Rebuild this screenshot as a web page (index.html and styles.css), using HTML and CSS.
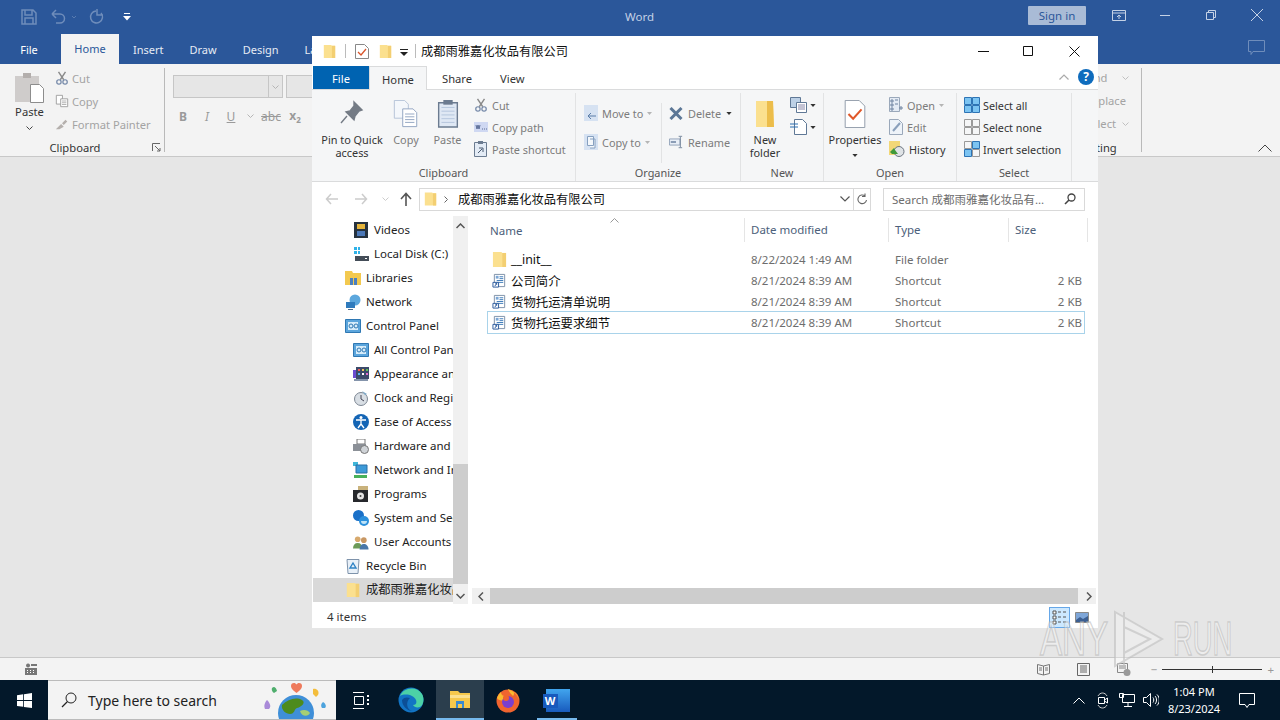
FILE: index.html
```html
<!DOCTYPE html>
<html lang="en">
<head>
  <meta charset="UTF-8">
  <meta name="viewport" content="width=device-width, initial-scale=1.0">
  <title>Word and File Explorer</title>
  <link rel="stylesheet" href="styles.css">
</head>
<body>
  <svg class="defs" width="0" height="0">
    <symbol id="folder" viewBox="0 0 16 18">
      <path d="M1 1h9l1 1h4v15H1z" fill="#fbe08f"/>
      <path d="M11 2h4v15h-4z" fill="#f3cf72"/>
    </symbol>
    <symbol id="link" viewBox="0 0 16 16">
      <path d="M2.500 1.500h11v13h-11z" fill="#fff" stroke="#7b8ea6"/>
      <path d="M8 4h4M8 6h4M5 8h7M5 10h7" stroke="#3a78b8"/>
      <path d="M4 3h3v3H4z" fill="#7ba7d6"/>
      <path d="M1 10h6v5H1z" fill="#fff" stroke="#27579c"/>
      <path d="M3 14l2-3M3.500 11H5v1.500" fill="none" stroke="#27579c"/>
    </symbol>
    <symbol id="cp" viewBox="0 0 16 14">
      <path d="M0.500 0.500h15v13H0.500z" fill="#5ba5dc" stroke="#2f78b3"/>
      <path d="M3 3h10v8H3z" fill="#d6ecfa"/>
      <circle cx="6" cy="7" r="2" fill="none" stroke="#2f78b3"/>
      <circle cx="11" cy="7" r="2" fill="none" stroke="#2f78b3"/>
    </symbol>
    <symbol id="scissors" viewBox="0 0 16 16">
      <path d="M4 1l6 9M12 1L6 10" stroke="#8a8a8a" stroke-width="1.600" fill="none"/>
      <circle cx="4.500" cy="12.500" r="2.500" fill="none" stroke="#7488a8" stroke-width="1.400"/>
      <circle cx="11.500" cy="12.500" r="2.500" fill="none" stroke="#7488a8" stroke-width="1.400"/>
    </symbol>
    <symbol id="pages" viewBox="0 0 16 16">
      <path d="M1.500 1.500h7v10h-7z" fill="#fff" stroke="#999"/>
      <path d="M6.500 5.500h8v9h-8z" fill="#fff" stroke="#999"/>
      <path d="M8 8h5M8 10h5M8 12h5" stroke="#aaa"/>
    </symbol>
    <symbol id="caret" viewBox="0 0 7 4">
      <path d="M0 0h7L3.500 4z" fill="currentColor"/>
    </symbol>
    <symbol id="chev" viewBox="0 0 7 4">
      <path d="M0.500 0.500l3 3 3-3" fill="none" stroke="currentColor"/>
    </symbol>
    <symbol id="grid4" viewBox="0 0 16 16">
      <path d="M0.500 0.500h7v7h-7zM8.500 0.500h7v7h-7zM0.500 8.500h7v7h-7zM8.500 8.500h7v7h-7z" fill="none" stroke="currentColor"/>
    </symbol>
  </svg>

  <div class="word">
    <div class="w-title">
      <div class="qat">
        <svg width="16" height="16" viewBox="0 0 16 16"><path d="M1 1h11l3 3v11H1z M4 1v5h7V1 M4 15v-6h8v6" fill="none" stroke="#6f8dbb" stroke-width="1.500"/></svg>
        <svg width="26" height="16" viewBox="0 0 26 16"><path d="M2 5h8a4 4 0 0 1 0 9H6M2 5l4-4M2 5l4 4" fill="none" stroke="#6f8dbb" stroke-width="1.500"/><path d="M22 7l2 2 2-2" fill="none" stroke="#587bb0"/></svg>
        <svg width="16" height="16" viewBox="0 0 16 16"><path d="M12 4a6 6 0 1 1-5-2M8 0v6h6" fill="none" stroke="#6f8dbb" stroke-width="1.500"/></svg>
        <svg class="qat-more" width="8" height="8" viewBox="0 0 8 8"><path d="M1 0h6v1H1zM0 3h8L4 7.500z" fill="#fff"/></svg>
      </div>
      <span class="w-name">Word</span>
      <div class="w-controls">
        <span class="signin">Sign in</span>
        <svg width="14" height="11" viewBox="0 0 14 11"><path d="M0.500 0.500h13v10H0.500zM0.500 3h13M7 9V5M5 7l2-2 2 2" fill="none" stroke="#c5d2e6"/></svg>
        <svg class="w-min" width="10" height="1" viewBox="0 0 10 1"><path d="M0 0h10v1H0z" fill="#c5d2e6"/></svg>
        <svg class="w-max" width="10" height="10" viewBox="0 0 10 10"><path d="M0.500 2.500h7v7h-7zM2.500 2.500v-2h7v7h-2" fill="none" stroke="#c5d2e6"/></svg>
        <svg class="w-close" width="12" height="12" viewBox="0 0 12 12"><path d="M0 0l12 12M12 0L0 12" stroke="#c5d2e6"/></svg>
      </div>
    </div>
    <div class="w-tabs">
      <span class="w-file">File</span>
      <span class="w-tab active">Home</span>
      <span class="w-tab">Insert</span>
      <span class="w-tab">Draw</span>
      <span class="w-tab">Design</span>
      <span class="w-tab">Layout</span>
      <svg class="w-comment" width="17" height="15" viewBox="0 0 17 15"><path d="M0.500 0.500h16v11H5l-2 3v-3H0.500z" fill="none" stroke="#6f8dbb"/></svg>
    </div>
    <div class="w-ribbon">
      <div class="w-clip">
        <div class="w-clip-body">
          <div class="w-paste">
            <svg width="29" height="31" viewBox="0 0 29 31"><path d="M0 4h24v26H0z" fill="#cfcccb"/><path d="M8 1h8v5H8z" fill="#b3aeac"/><path d="M15.500 12.500h9l4 4v14h-13z" fill="#fff" stroke="#8d8d8d"/></svg>
            <span>Paste</span>
            <svg class="w-chev" width="7" height="4"><use href="#chev"/></svg>
          </div>
          <div class="w-small">
            <div><svg width="14" height="14"><use href="#scissors"/></svg>Cut</div>
            <div><svg width="14" height="14"><use href="#pages"/></svg>Copy</div>
            <div><svg width="14" height="14" viewBox="0 0 16 14"><path d="M1 13l6-6 3 3-5 3zM8 6l4-4 2 2-4 4z" fill="#b5b0ad"/></svg>Format Painter</div>
          </div>
        </div>
        <div class="w-group-label">Clipboard<svg class="launcher" width="9" height="9" viewBox="0 0 9 9"><path d="M0.500 8V0.500H8M3 3l5 5M5 8h3V5" fill="none" stroke="#666"/></svg></div>
      </div>
      <div class="w-font">
        <div class="combo-row">
          <div class="combo"><span class="combo-arrow"><svg width="7" height="4"><use href="#chev"/></svg></span></div>
          <div class="combo combo-size"></div>
        </div>
        <div class="fmt-row">
          <b>B</b><i>I</i><u>U</u><span class="fmt-chev"><svg width="7" height="4"><use href="#chev"/></svg></span><s>abc</s><span class="fmt-sub">x<sub>2</sub></span>
        </div>
      </div>
      <div class="w-edit">
        <div class="w-edit-list">
          <span>Find<svg width="7" height="4"><use href="#chev"/></svg></span>
          <span>Replace</span>
          <span>Select<svg width="7" height="4"><use href="#chev"/></svg></span>
        </div>
        <div class="w-group-label edit-label">Editing</div>
      </div>
      <div class="w-collapse">
        <svg width="14" height="8" viewBox="0 0 14 8"><path d="M0.500 7.500L7 1l6.500 6.500" fill="none" stroke="#444"/></svg>
      </div>
    </div>
    <div class="w-doc"></div>
    <div class="w-status">
      <svg class="macro" width="12" height="12" viewBox="0 0 12 12"><path d="M3 0.500a2 2 0 1 0 .1 0zM6 1h6v2H6zM0 5h12v7H0z" fill="#777"/><path d="M2 7h1v1H2zM5 7h1v1H5zM8 7h1v1H8zM2 9h1v1H2zM5 9h1v1H5zM8 9h1v1H8z" fill="#fff"/></svg>
      <div class="w-views">
        <svg width="13" height="13" viewBox="0 0 13 13"><path d="M0.500 1.500L6.500 3l6-1.500v9l-6 1.500-6-1.500zM6.500 3v9M2 5h3M2 7h3M8 5h3M8 7h3" fill="none" stroke="#777"/></svg>
        <svg width="13" height="13" viewBox="0 0 13 13"><path d="M0.500 0.500h12v12H0.500zM3 3h7M3 5h7M3 7h7M3 9h7" fill="none" stroke="#666"/></svg>
        <svg width="14" height="13" viewBox="0 0 14 13"><path d="M0.500 0.500h10v9H0.500zM2 3h7M2 5h7" fill="none" stroke="#888"/><circle cx="10" cy="9.500" r="3.500" fill="#999"/></svg>
        <div class="zoom">
          <span>−</span>
          <div class="zoom-track"><i></i></div>
          <span>+</span>
        </div>
      </div>
    </div>
  </div>

  <div class="taskbar">
    <div class="tb-start">
      <svg width="15" height="15" viewBox="0 0 15 15"><path d="M0 2.200L6.200 1.300V7H0zM7 1.200L15 0v7H7zM0 8h6.200v5.800L0 12.900zM7 8h8v7l-8-1.100z" fill="#fff"/></svg>
    </div>
    <div class="tb-search">
      <svg width="16" height="16" viewBox="0 0 16 16"><circle cx="10" cy="6" r="5" fill="none" stroke="#222"/><path d="M6.500 9.500L1 15" stroke="#222" stroke-width="1.300"/></svg>
      <span>Type here to search</span>
      <svg class="tb-globe" width="72" height="40" viewBox="0 0 72 40">
        <circle cx="36" cy="33" r="18" fill="#3f8fd8"/>
        <path d="M22 25c6-6 14-8 20-5 4 2 0 7-5 8-3 1-2 6-7 6-4 0-9-4-8-9z" fill="#4d8b1d"/>
        <path d="M40 31c4-2 8-1 10 2-2 4-8 4-10-2z" fill="#a6cf73"/>
        <path d="M34 11c-4-3-4-8 0-8 1 0 2 .6 2.500 1.500C37 3.600 38 3 39 3c4 0 4 5 0 8l-2.500 2z" fill="#ee7a5c"/>
        <path d="M14 13c-3-2-3-6 0-6 2 0 3 4 3 4z" fill="#4fae6d"/>
        <path d="M53 9c3-1 7 2 5 6l-2 2-3-3z" fill="#f3bd3c"/>
        <path d="M5 29c-2-4 1-8 2-9 2 2 5 6 2 9z" fill="#a98ad8"/>
        <path d="M62 28c-2-3 0-5 1-6 2 1 4 4 2 6z" fill="#4da3dd"/>
      </svg>
    </div>
    <div class="tb-icons">
      <div class="tb-icon tb-view">
        <svg width="16" height="17" viewBox="0 0 16 17"><path d="M0 0.500h11M0 16.500h11M1.500 4.500h9v8h-9z" fill="none" stroke="#fff"/><path d="M14 3h2v2h-2zM14 7h2v2h-2zM14 11h2v2h-2z" fill="#fff"/></svg>
      </div>
      <div class="tb-icon tb-edge">
        <svg width="26" height="26" viewBox="0 0 26 26"><circle cx="13" cy="13" r="12.500" fill="#1274c4"/><path d="M2 9C5 1 18-2 24 7c3 5 1 12-2 13-3 1-6 0-7-2 3 0 4-2 3-5-2-5-11-7-16-4z" fill="#4cd1a6"/><path d="M4 13c0 6 5 11 11 11-6 0-8-9-3-13-3-1-6-1-8 2z" fill="#0c4f96"/></svg>
      </div>
      <div class="tb-icon tb-explorer">
        <svg width="20" height="18" viewBox="0 0 20 18"><path d="M0 1h8l2 2h10v15H0z" fill="#f6c84c"/><path d="M0 5h20v3H0z" fill="#fbe08f"/><path d="M6 11h8v7h-2v-4H8v4H6z" fill="#3a8ad0"/></svg>
      </div>
      <div class="tb-icon tb-fox">
        <svg width="24" height="26" viewBox="0 0 24 26"><circle cx="12" cy="14" r="11.500" fill="#f0642f"/><path d="M12 2c6 2 11 7 11 13 0-6-3-9-5-10 0 2 0 3-1 4-2-2-4-4-5-7z" fill="#fbb930"/><path d="M1 11c1-3 3-5 4-6 0 3 2 4 4 4-2 1-2 3-1 4-3 1-6 0-7-2z" fill="#fbb930"/><circle cx="12" cy="15" r="6" fill="#7a3fd0"/><circle cx="10" cy="11" r="3" fill="#f0642f"/></svg>
      </div>
      <div class="tb-icon tb-word">
        <div class="word-logo"><span>W</span></div>
      </div>
    </div>
    <div class="tray">
      <svg width="12" height="7" viewBox="0 0 12 7"><path d="M0.500 6.500L6 1l5.500 5.500" fill="none" stroke="#fff"/></svg>
      <svg class="tray-meet" width="12" height="17" viewBox="0 0 12 17"><path d="M1 4c2-4 7-4 9 0M1 13c2 4 7 4 9 0" fill="none" stroke="#ccc"/><path d="M1.500 5.500h6v6h-6zM7.500 8l3-2v5l-3-2" fill="none" stroke="#fff"/></svg>
      <svg class="tray-net" width="16" height="14" viewBox="0 0 16 14"><path d="M3.500 1.500h12v8h-12zM9 9.500V13M5 13.500h8M0.500 0.500h4v4h-4z" fill="#03182a" stroke="#fff"/></svg>
      <svg class="tray-vol" width="16" height="14" viewBox="0 0 16 14"><path d="M0.500 4.500h3l4-4v13l-4-4h-3zM10 4.500c1 1 1 4 0 5M12 3c2 2 2 6 0 8M14 1.500c3 3 3 8 0 11" fill="none" stroke="#fff"/></svg>
      <div class="clock"><span>1:04 PM</span><span>8/23/2024</span></div>
      <svg width="16" height="15" viewBox="0 0 16 15"><path d="M0.500 0.500h15v11H10l-2 3-2-3H0.500z" fill="none" stroke="#fff"/></svg>
    </div>
  </div>

  <div class="explorer">
    <div class="x-title">
      <svg class="x-q" width="13" height="15"><use href="#folder"/></svg>
      <i class="x-bar"></i>
      <svg class="x-q" width="14" height="15" viewBox="0 0 14 15"><path d="M0.500 0.500h9l4 4v10h-13z" fill="#fff" stroke="#888"/><path d="M3 8l3 3 5-6" fill="none" stroke="#d9542a" stroke-width="1.300"/></svg>
      <svg class="x-q" width="13" height="15"><use href="#folder"/></svg>
      <svg class="x-more" width="8" height="7" viewBox="0 0 8 7"><path d="M0 0h8v1H0zM0 3h8L4 7z" fill="#222"/></svg>
      <i class="x-bar x-bar-end"></i>
      <span class="x-name">成都雨雅嘉化妆品有限公司</span>
      <div class="x-controls">
        <svg width="11" height="1" viewBox="0 0 11 1"><path d="M0 0h11v1H0z" fill="#111"/></svg>
        <svg class="x-maximize" width="10" height="10" viewBox="0 0 10 10"><path d="M0.500 0.500h9v9h-9z" fill="none" stroke="#111"/></svg>
        <svg width="11" height="11" viewBox="0 0 11 11"><path d="M0.500 0.500l10 10M10.500 0.500l-10 10" stroke="#111"/></svg>
      </div>
    </div>
    <div class="x-tabs">
      <span class="x-file">File</span>
      <span class="x-tab active">Home</span>
      <span class="x-tab">Share</span>
      <span class="x-tab">View</span>
      <div class="x-help">
        <svg width="10" height="6" viewBox="0 0 10 6"><path d="M0.500 5.500L5 1l4.500 4.500" fill="none" stroke="#aaa" stroke-width="1.200"/></svg>
        <span class="help-dot">?</span>
      </div>
    </div>
    <div class="x-ribbon">
      <div class="group g-clipboard">
        <div class="group-body">
          <div class="big b-pin">
            <svg width="24" height="28" viewBox="0 0 24 28"><path d="M14 2l8 8-3 1-4 5-1 4-8-8 4-1 4-5zM7 16l-6 7" fill="#747b85" stroke="#747b85" stroke-width="1.400"/></svg>
            <span>Pin to Quick<br>access</span>
          </div>
          <div class="big b-copy dim">
            <svg width="26" height="30" viewBox="0 0 26 30"><path d="M0.500 0.500h11l4 4v15h-15z" fill="#f4f7fb" stroke="#b4c2d6"/><path d="M9.500 9.500h11l4 4v15h-15z" fill="#fff" stroke="#8fa3bf"/><path d="M12 15h10M12 18h10M12 21h10M12 24h10" stroke="#8fa3bf"/></svg>
            <span>Copy</span>
          </div>
          <div class="big b-paste dim">
            <svg width="22" height="30" viewBox="0 0 22 30"><path d="M1 3h20v26H1z" fill="#dfe8f4" stroke="#6b7b90" stroke-width="1.500"/><path d="M6 0h10v5H6z" fill="#6b7b90"/><path d="M4 8h14M4 12h14M4 16h14M4 20h14M4 24h14" stroke="#b3c4dc"/></svg>
            <span>Paste</span>
          </div>
          <div class="smalls dim">
            <div><svg width="14" height="16"><use href="#scissors"/></svg>Cut</div>
            <div><svg width="14" height="10" viewBox="0 0 14 10"><path d="M0 0h14v10H0z" fill="#cfd8f2"/><path d="M2 3l1 4 1-4 1 4 1-4M8 7h1M10 7h1M12 7h1" stroke="#5a6c96" fill="none"/></svg>Copy path</div>
            <div><svg width="14" height="16" viewBox="0 0 14 16"><path d="M0.500 1.500h12v14h-12z" fill="#e3ebf5" stroke="#6b7b90"/><path d="M4 0h5v3H4z" fill="#6b7b90"/><path d="M4 12l4-4M5 7h4v4" stroke="#4a5a70" fill="none"/></svg>Paste shortcut</div>
          </div>
        </div>
        <div class="group-label">Clipboard</div>
      </div>
      <div class="group g-organize">
        <div class="group-body">
          <div class="two-col dim">
            <div class="mid"><svg width="14" height="16" viewBox="0 0 14 16"><path d="M0 0h14v16H0z" fill="#d6e2f2"/><path d="M4 11h8M4 11l3-3M4 11l3 3" stroke="#5a7da8" fill="none"/></svg>Move to<svg class="mini" width="5" height="3"><use href="#caret"/></svg></div>
            <div class="mid"><svg width="14" height="16" viewBox="0 0 14 16"><path d="M0 0h14v16H0z" fill="#d6e2f2"/><path d="M3.500 2.500h6v9h-6zM6 5h5v9H6" fill="#f3f7fb" stroke="#86a0c0"/></svg>Copy to<svg class="mini" width="5" height="3"><use href="#caret"/></svg></div>
          </div>
          <i class="inner-sep"></i>
          <div class="two-col dim col-del">
            <div class="mid"><svg width="14" height="13" viewBox="0 0 14 13"><path d="M1.500 1l11 11M12.500 1l-11 11" stroke="#5c7796" stroke-width="3"/></svg>Delete<svg class="mini dark" width="6" height="3"><use href="#caret"/></svg></div>
            <div class="mid"><svg width="14" height="14" viewBox="0 0 16 14"><path d="M0.500 3.500h12v7h-12z" fill="#e8eef6" stroke="#8a9cb3"/><path d="M2 6h6v2H2z" fill="#7e92ad"/><path d="M13 1v12M11 0.500h4M11 13.500h4" stroke="#6d7f96"/></svg>Rename</div>
          </div>
        </div>
        <div class="group-label">Organize</div>
      </div>
      <div class="group g-new">
        <div class="group-body">
          <div class="big b-newfolder">
            <svg width="20" height="28" viewBox="0 0 20 28"><path d="M1 1h17l1 26H1z" fill="#fbe08f"/><path d="M12 1h6l1 26h-7z" fill="#ecbd4b"/></svg>
            <span>New<br>folder</span>
          </div>
          <div class="new-small">
            <div><svg width="18" height="16" viewBox="0 0 18 16"><path d="M0.500 0.500h10v10h-10z" fill="#bcd0e6" stroke="#5f7896"/><path d="M6.500 5.500h10v10h-10z" fill="#fff" stroke="#5f7896"/><path d="M8 8h7M8 10h7M8 12h7" stroke="#88a"/></svg><svg class="mini dark" width="6" height="3"><use href="#caret"/></svg></div>
            <div><svg width="18" height="16" viewBox="0 0 18 16"><path d="M4.500 0.500h8l4 4v11h-12z" fill="#fff" stroke="#5f7896"/><path d="M0 5h8M0 8h8" stroke="#2d6fb0"/></svg><svg class="mini dark" width="6" height="3"><use href="#caret"/></svg></div>
          </div>
        </div>
        <div class="group-label">New</div>
      </div>
      <div class="group g-open">
        <div class="group-body">
          <div class="big b-props">
            <svg width="22" height="30" viewBox="0 0 22 30"><path d="M0.500 0.500h15l6 6v23h-21z" fill="#fff" stroke="#8d98a6"/><path d="M4 15l5 5 9-10" fill="none" stroke="#e0582a" stroke-width="2.200"/></svg>
            <span>Properties</span>
            <svg class="prop-caret" width="6" height="3"><use href="#caret"/></svg>
          </div>
          <div class="smalls open-list">
            <div class="dim"><svg width="14" height="16" viewBox="0 0 14 16"><path d="M0.500 0.500h10v14h-10z" fill="#e4ebf4" stroke="#9aa8ba"/><path d="M2 3h2v2H2zM2 7h2v2H2zM2 11h2v2H2zM6 3h3M6 7h3M10 11h4M12 9v4" stroke="#6f83a0" fill="none"/></svg>Open<svg class="mini" width="5" height="3"><use href="#caret"/></svg></div>
            <div class="dim"><svg width="14" height="16" viewBox="0 0 14 16"><path d="M0.500 0.500h9l4 4v11h-13z" fill="#eef3f9" stroke="#9aa8ba"/><path d="M4 12l7-8" stroke="#8aa0bc" stroke-width="2"/></svg>Edit</div>
            <div><svg width="16" height="16" viewBox="0 0 16 16"><path d="M0 0h11v14H0z" fill="#f2d777"/><circle cx="10" cy="10.500" r="5" fill="#dfe3e6" stroke="#6b7480"/><path d="M1 11l4-4 1 2 3 4H3z" fill="#3f9a3a"/></svg>History</div>
          </div>
        </div>
        <div class="group-label">Open</div>
      </div>
      <div class="group g-select">
        <div class="group-body">
          <div class="smalls select-list">
            <div><svg width="16" height="16" viewBox="0 0 16 16"><path d="M0.500 0.500h7v7h-7zM8.500 0.500h7v7h-7zM0.500 8.500h7v7h-7zM8.500 8.500h7v7h-7z" fill="#7cc4f2" stroke="#2e74b5"/></svg>Select all</div>
            <div><svg class="ico-gray" width="16" height="16"><use href="#grid4"/></svg>Select none</div>
            <div><svg width="16" height="16" viewBox="0 0 16 16"><path d="M8.500 0.500h7v7h-7zM0.500 8.500h7v7h-7z" fill="#7cc4f2" stroke="#2e74b5"/><path d="M0.500 0.500h7v7h-7zM8.500 8.500h7v7h-7z" fill="none" stroke="#999"/></svg>Invert selection</div>
          </div>
        </div>
        <div class="group-label">Select</div>
      </div>
    </div>
    <div class="x-address">
      <div class="x-nav">
        <svg width="14" height="12" viewBox="0 0 14 12"><path d="M13 6H2M6 1L1.500 6 6 11" fill="none" stroke="#ccc" stroke-width="1.500"/></svg>
        <svg width="14" height="12" viewBox="0 0 14 12"><path d="M1 6h11M8 1l4.500 5L8 11" fill="none" stroke="#ccc" stroke-width="1.500"/></svg>
        <svg width="7" height="4" viewBox="0 0 7 4"><path d="M0.500 0.500l3 3 3-3" fill="none" stroke="#ccc"/></svg>
        <svg width="12" height="14" viewBox="0 0 12 14"><path d="M6 14V2M1 7l5-5.500L11 7" fill="none" stroke="#555" stroke-width="1.600"/></svg>
      </div>
      <div class="x-path">
        <svg width="13" height="16"><use href="#folder"/></svg>
        <svg class="path-chev" width="4" height="7" viewBox="0 0 4 7"><path d="M0.500 0.500l3 3-3 3" fill="none" stroke="#666"/></svg>
        <span>成都雨雅嘉化妆品有限公司</span>
        <div class="path-end">
          <svg width="10" height="6" viewBox="0 0 10 6"><path d="M0.500 0.500L5 5l4.500-4.500" fill="none" stroke="#555" stroke-width="1.200"/></svg>
          <i></i>
          <svg width="11" height="12" viewBox="0 0 11 12"><path d="M9.500 7A4.300 4.300 0 1 1 8 3M8 0.500V3.500H5" fill="none" stroke="#666" stroke-width="1.100"/></svg>
        </div>
      </div>
      <div class="x-search">
        <span>Search 成都雨雅嘉化妆品有...</span>
        <svg width="12" height="12" viewBox="0 0 12 12"><circle cx="7.500" cy="4.500" r="3.500" fill="none" stroke="#444" stroke-width="1.300"/><path d="M5 7l-4 4" stroke="#444" stroke-width="1.600"/></svg>
      </div>
    </div>
    <div class="x-main">
      <div class="nav-pane">
        <div class="nav-rows">
          <div class="nav-row sub"><svg width="16" height="16" viewBox="0 0 16 16"><path d="M1 0h14v16H1z" fill="#26323f"/><path d="M4 2h8v5H4z" fill="#e4b43c"/><path d="M4 9h8v5H4z" fill="#4b78b8"/></svg><span>Videos</span></div>
          <div class="nav-row sub"><svg width="16" height="14" viewBox="0 0 16 14"><path d="M1 0h3v3H1zM5 0h2v3H5zM1 4h3v3H1zM5 4h2v3H5z" fill="#2fb2e8"/><path d="M2 9h14v5H2z" fill="#444d58"/><path d="M12 11h2v1h-2z" fill="#fff"/></svg><span>Local Disk (C:)</span></div>
          <div class="nav-row"><svg width="16" height="14" viewBox="0 0 16 14"><path d="M0 0h7l1 2h8v12H0z" fill="#f3c94f"/><path d="M5 7h3v7H5zM9 7h3v7H9z" fill="#4a7fc0"/></svg><span>Libraries</span></div>
          <div class="nav-row"><svg width="16" height="16" viewBox="0 0 16 16"><circle cx="10" cy="6" r="5.500" fill="#5ca7dd"/><path d="M1 8h9v6H1z" fill="#2f7bbd"/><path d="M3 15h5v1H3z" fill="#4a6a8a"/></svg><span>Network</span></div>
          <div class="nav-row"><svg width="16" height="14"><use href="#cp"/></svg><span>Control Panel</span></div>
          <div class="nav-row sub"><svg width="16" height="14"><use href="#cp"/></svg><span>All Control Panel Items</span></div>
          <div class="nav-row sub"><svg width="16" height="14" viewBox="0 0 16 14"><path d="M0 3h4v8H0z" fill="#6a4bd0"/><path d="M3 0h13v12H3z" fill="#3b4a6a"/><path d="M5 2h2v2H5z" fill="#f05a5a"/><path d="M9 2h2v2H9z" fill="#f0c05a"/><path d="M13 2h2v2h-2z" fill="#5ac05a"/><path d="M5 6h2v2H5z" fill="#5ab0f0"/><path d="M9 6h2v2H9z" fill="#fff"/><path d="M13 6h2v2h-2z" fill="#e070d0"/><path d="M1 12h14v2H1z" fill="#8494ab"/></svg><span>Appearance and Personalization</span></div>
          <div class="nav-row sub"><svg width="16" height="16" viewBox="0 0 16 16"><circle cx="8" cy="9" r="6.500" fill="#d8dee4" stroke="#7d8793"/><path d="M8 5v4l3 2" stroke="#445" fill="none"/><path d="M9 1l5 3-2 1z" fill="#7aa7c8"/></svg><span>Clock and Region</span></div>
          <div class="nav-row sub"><svg width="16" height="16" viewBox="0 0 16 16"><circle cx="8" cy="8" r="8" fill="#1465b5"/><circle cx="8" cy="3.500" r="1.500" fill="#fff"/><path d="M3 6h10M8 6v4M8 10l-3 4M8 10l3 4" stroke="#fff" stroke-width="1.300"/></svg><span>Ease of Access</span></div>
          <div class="nav-row sub"><svg width="16" height="15" viewBox="0 0 16 15"><path d="M4 0h8v5H4z" fill="#fff" stroke="#777"/><path d="M0 5h13v7H0z" fill="#8b9097"/><circle cx="11.500" cy="10.500" r="4" fill="#cfd3d7" stroke="#777"/></svg><span>Hardware and Sound</span></div>
          <div class="nav-row sub"><svg width="16" height="16" viewBox="0 0 16 16"><path d="M0 0h5v4H0z" fill="#3fb6d8"/><path d="M3 3h11v8H3z" fill="#3d9ad8" stroke="#2a6fa5"/><path d="M1 13h13v3H1z" fill="#49b15a"/></svg><span>Network and Internet</span></div>
          <div class="nav-row sub"><svg width="16" height="16" viewBox="0 0 16 16"><path d="M0 4h15v12H0z" fill="#26282c"/><path d="M5 0h10v4H5z" fill="#c9b27c"/><circle cx="7.500" cy="10" r="3.500" fill="#e5e5e5"/><circle cx="7.500" cy="10" r="1" fill="#444"/></svg><span>Programs</span></div>
          <div class="nav-row sub"><svg width="16" height="16" viewBox="0 0 16 16"><circle cx="5.500" cy="5.500" r="5.500" fill="#1a70c8"/><circle cx="11" cy="11" r="5" fill="#2c90dc"/><path d="M8 11a3 3 0 0 0 6 0z" fill="#bfe3f7"/></svg><span>System and Security</span></div>
          <div class="nav-row sub"><svg width="17" height="15" viewBox="0 0 17 15"><circle cx="5" cy="4" r="3" fill="#d7a96d"/><path d="M0 14c0-4 2-6 5-6s5 2 5 6z" fill="#6c9a58"/><circle cx="11.500" cy="5" r="3" fill="#c89763"/><path d="M7 15c0-4 2-6 4.500-6s5 2 5 6z" fill="#4977a8"/></svg><span>User Accounts</span></div>
          <div class="nav-row"><svg width="13" height="15" viewBox="0 0 13 15"><path d="M0.500 0.500h12l-1 14h-10z" fill="#e8f0f8" stroke="#7e93ab"/><path d="M6.500 4l3 5h-6z" fill="none" stroke="#2d82c5" stroke-width="1.400"/></svg><span>Recycle Bin</span></div>
          <div class="nav-row picked"><svg width="14" height="16"><use href="#folder"/></svg><span>成都雨雅嘉化妆品有限公司</span></div>
        </div>
        <div class="v-scroll">
          <svg width="9" height="6" viewBox="0 0 9 6"><path d="M0.500 5L4.500 1l4 4" fill="none" stroke="#555" stroke-width="1.500"/></svg>
          <div class="v-track"><div class="v-thumb"></div></div>
          <svg width="9" height="6" viewBox="0 0 9 6"><path d="M0.500 1l4 4 4-4" fill="none" stroke="#555" stroke-width="1.500"/></svg>
        </div>
      </div>
      <div class="file-pane">
        <div class="file-head">
          <svg class="sort-arrow" width="9" height="5" viewBox="0 0 9 5"><path d="M0.500 4.500l4-4 4 4" fill="none" stroke="#999"/></svg>
          <span class="c-name">Name</span>
          <span class="c-date">Date modified</span>
          <span class="c-type">Type</span>
          <span class="c-size">Size</span>
        </div>
        <div class="file-rows">
          <div class="file-row">
            <span class="c-name"><svg width="15" height="17"><use href="#folder"/></svg><b>__init__</b></span>
            <span class="c-date">8/22/2024 1:49 AM</span>
            <span class="c-type">File folder</span>
            <span class="c-size"></span>
          </div>
          <div class="file-row">
            <span class="c-name"><svg width="15" height="15"><use href="#link"/></svg><b>公司简介</b></span>
            <span class="c-date">8/21/2024 8:39 AM</span>
            <span class="c-type">Shortcut</span>
            <span class="c-size">2 KB</span>
          </div>
          <div class="file-row">
            <span class="c-name"><svg width="15" height="15"><use href="#link"/></svg><b>货物托运清单说明</b></span>
            <span class="c-date">8/21/2024 8:39 AM</span>
            <span class="c-type">Shortcut</span>
            <span class="c-size">2 KB</span>
          </div>
          <div class="file-row focused">
            <span class="c-name"><svg width="15" height="15"><use href="#link"/></svg><b>货物托运要求细节</b></span>
            <span class="c-date">8/21/2024 8:39 AM</span>
            <span class="c-type">Shortcut</span>
            <span class="c-size">2 KB</span>
          </div>
        </div>
        <div class="h-scroll">
          <svg width="6" height="9" viewBox="0 0 6 9"><path d="M5 0.500l-4 4 4 4" fill="none" stroke="#555" stroke-width="1.500"/></svg>
          <div class="h-thumb"></div>
          <svg width="6" height="9" viewBox="0 0 6 9"><path d="M1 0.500l4 4-4 4" fill="none" stroke="#555" stroke-width="1.500"/></svg>
        </div>
      </div>
    </div>
    <div class="x-status">
      <span>4 items</span>
      <div class="x-views">
        <div class="view-btn on"><svg width="15" height="15" viewBox="0 0 15 15"><path d="M1 1h3v3H1zM1 6h3v3H1zM1 11h3v3H1zM6 2h3M11 2h3M6 7h3M11 7h3M6 12h3M11 12h3" fill="#fff" stroke="#555"/></svg></div>
        <div class="view-btn"><svg width="14" height="11" viewBox="0 0 14 11"><path d="M0.500 0.500h13v10H0.500z" fill="#7ea6d8" stroke="#888"/><path d="M1 8l4-3 3 2 5-3v6H1z" fill="#3c5f92"/></svg></div>
      </div>
    </div>
  </div>

  <div class="watermark">
    <span class="wm-any">ANY</span>
    <svg width="54" height="60" viewBox="0 0 54 60"><path d="M3 3l47 27L3 57zM12 3v54M12 18l26 12-26 14" fill="rgba(255,255,255,.25)" stroke="rgba(190,190,190,.6)" stroke-width="2"/></svg>
    <span class="wm-run">RUN</span>
  </div>
</body>
</html>
```

FILE: styles.css
```css
* {
  box-sizing: border-box;
}
html, body {
  height: 100%;
}
body {
  margin: 0;
  width: 1280px;
  height: 720px;
  overflow: hidden;
  display: flex;
  flex-direction: column;
  position: relative;
  font-family: 'Noto Sans', 'Noto Sans CJK SC', sans-serif;
  font-size: 11.5px;
  color: #222;
  background: #e6e6e6;
}
svg {
  display: block;
  flex: none;
}
.defs {
  position: absolute;
}

/* Word behind the explorer window */
.word {
  flex: 1;
  display: flex;
  flex-direction: column;
  min-height: 0;
}
.w-title {
  height: 34px;
  background: #2b579a;
  display: flex;
  align-items: center;
  color: #c5d2e6;
  position: relative;
}
.qat {
  display: flex;
  align-items: center;
  gap: 13px;
  padding-left: 21px;
}
.qat-more {
  margin-left: 5px;
}
.w-name {
  position: absolute;
  left: 625px;
  top: 9px;
}
.w-controls {
  margin-left: auto;
  margin-top: -4px;
  display: flex;
  align-items: center;
}
.signin {
  width: 58px;
  height: 19px;
  margin-right: 26px;
  background: #a9bbd6;
  color: #2b579a;
  text-align: center;
  line-height: 19px;
  border-radius: 1px;
}
.w-min {
  margin-left: 34px;
}
.w-max {
  margin-left: 36px;
}
.w-close {
  margin-left: 35px;
  margin-right: 17px;
}
.w-tabs {
  height: 30px;
  background: #2b579a;
  display: flex;
  align-items: flex-end;
  color: #e6ebf4;
  font-size: 11px;
  position: relative;
}
.w-file {
  width: 61px;
  text-align: center;
  padding-bottom: 7px;
  color: #fff;
  padding-right: 3px;
}
.w-tab {
  padding: 0 13px 7px;
}
.w-tab.active {
  width: 58px;
  height: 30px;
  margin-right: 1px;
  background: #f3f3f3;
  color: #2b579a;
  text-align: center;
  padding: 7px 0 0;
}
.w-comment {
  position: absolute;
  right: 15px;
  top: 6px;
}
.w-ribbon {
  height: 93px;
  background: #f3f3f3;
  border-bottom: 1px solid #c8c8c8;
  display: flex;
  color: #a3a3a3;
  font-size: 11.2px;
}
.w-clip {
  width: 165px;
  margin: 4px 0;
  border-right: 1px solid #b9b9b9;
  display: flex;
  flex-direction: column;
  justify-content: space-between;
}
.w-clip-body {
  display: flex;
}
.w-paste {
  width: 50px;
  padding: 4px 0 0 9px;
  display: flex;
  flex-direction: column;
  align-items: center;
  color: #333;
}
.w-paste span {
  margin-top: 1px;
}
.w-chev {
  margin-top: 7px;
  color: #444;
}
.w-small {
  padding-top: 2px;
  margin-left: 5px;
  display: flex;
  flex-direction: column;
  gap: 7px;
}
.w-small div {
  height: 16px;
  display: flex;
  align-items: center;
  gap: 3px;
  white-space: nowrap;
}
.w-group-label {
  color: #333;
  position: relative;
  text-align: center;
  padding: 0 14px 0 0;
  line-height: 16px;
  margin-bottom: -4px;
}
.launcher {
  position: absolute;
  right: 3px;
  top: 3px;
}
.w-font {
  flex: 1;
  padding: 11px 0 0 8px;
}
.combo-row {
  display: flex;
  gap: 3px;
}
.combo {
  width: 110px;
  height: 23px;
  background: #e6e6e6;
  border: 1px solid #c6c6c6;
  position: relative;
}
.combo-size {
  width: 60px;
}
.combo-arrow {
  position: absolute;
  right: 0;
  top: 0;
  width: 14px;
  height: 21px;
  border-left: 1px solid #c6c6c6;
  display: flex;
  align-items: center;
  justify-content: center;
  color: #b5b5b5;
}
.fmt-row {
  display: flex;
  align-items: center;
  margin-left: -2px;
  padding-top: 9px;
  font-size: 12px;
  color: #9a9a9a;
  text-align: center;
}
.fmt-row b, .fmt-row i, .fmt-row u {
  width: 24px;
}
.fmt-chev {
  width: 14px;
  display: flex;
  justify-content: center;
  color: #b5b5b5;
}
.fmt-row s {
  width: 28px;
}
.fmt-sub {
  width: 20px;
  font-weight: 700;
}
.fmt-sub sub {
  font-size: 8px;
}
.w-edit {
  width: 59px;
  margin: 4px 0;
  padding-left: 2px;
  border-right: 1px solid #b9b9b9;
  display: flex;
  flex-direction: column;
  justify-content: space-between;
  flex: none;
}
.w-edit-list {
  padding-top: 2px;
  display: flex;
  flex-direction: column;
  gap: 7px;
  line-height: 16px;
}
.w-edit-list span {
  width: 44px;
  display: flex;
  align-items: center;
  justify-content: space-between;
  height: 16px;
  color: #a3a3a3;
}
.w-edit-list svg {
  color: #c0c0c0;
}
.edit-label {
  text-align: left;
  padding: 0;
  margin-left: -5px;
}
.w-collapse {
  width: 138px;
  flex: none;
  display: flex;
  justify-content: flex-end;
  align-items: flex-end;
  padding: 0 8px 4px 0;
}
.w-doc {
  flex: 1;
  background: #e6e6e6;
}
.w-status {
  height: 23px;
  background: #f3f3f3;
  border-top: 1px solid #c8c8c8;
  display: flex;
  align-items: center;
  padding-left: 25px;
}
.w-views {
  margin-left: auto;
  display: flex;
  align-items: center;
  gap: 27px;
  padding-right: 6px;
}
.zoom {
  display: flex;
  align-items: center;
  gap: 5px;
  margin-left: -7px;
  color: #999;
}
.zoom-track {
  width: 100px;
  height: 1px;
  background: #333;
  position: relative;
}
.zoom-track i {
  position: absolute;
  left: 50px;
  top: -3px;
  width: 1px;
  height: 7px;
  background: #333;
}

/* Taskbar */
.taskbar {
  height: 40px;
  background: #03182a;
  display: flex;
  color: #fff;
}
.tb-start {
  width: 48px;
  display: flex;
  align-items: center;
  justify-content: center;
}
.tb-search {
  width: 288px;
  background: #f3f3f3;
  border-top: 1px solid #bbb;
  border-bottom: 1px solid #bbb;
  color: #222;
  display: flex;
  align-items: center;
  gap: 11px;
  padding-left: 13px;
  font-size: 14px;
  position: relative;
  overflow: hidden;
}
.tb-globe {
  position: absolute;
  left: 212px;
  top: -1px;
}
.tb-icons {
  display: flex;
}
.tb-icon {
  width: 48px;
  height: 40px;
  display: flex;
  align-items: center;
  justify-content: center;
  position: relative;
}
.tb-view {
  width: 49px;
}
.tb-edge {
  width: 51px;
}
.tb-explorer {
  background: #2b3e4d;
  border-bottom: 2px solid #76b9ed;
}
.tb-word {
  padding-left: 3px;
}
.tb-word::after {
  content: '';
  position: absolute;
  left: 5px;
  right: 3px;
  bottom: 0;
  height: 2px;
  background: #76b9ed;
}
.word-logo {
  width: 24px;
  height: 23px;
  background: linear-gradient(#41a5ee, #185abd);
  position: relative;
}
.word-logo span {
  position: absolute;
  left: -3px;
  top: 5px;
  width: 15px;
  height: 14px;
  background: #185abd;
  color: #fff;
  font-size: 11px;
  font-weight: 700;
  line-height: 14px;
  text-align: center;
}
.tray {
  margin-left: auto;
  display: flex;
  align-items: center;
  padding-right: 25px;
}
.tray-meet {
  margin-left: 12px;
}
.tray-net {
  margin-left: 10px;
}
.tray-vol {
  margin-left: 8px;
}
.clock {
  width: 52px;
  display: flex;
  flex-direction: column;
  align-items: center;
  font-size: 11px;
  line-height: 17px;
  white-space: nowrap;
  margin: 0 19px 0 9px;
}

/* Explorer window */
.explorer {
  position: absolute;
  left: 312px;
  top: 36px;
  width: 786px;
  height: 592px;
  background: #fff;
  display: flex;
  flex-direction: column;
  z-index: 2;
}
.x-title {
  height: 30px;
  display: flex;
  align-items: center;
  padding-left: 11px;
}
.x-q {
  margin-right: 10px;
}
.x-bar {
  width: 1px;
  height: 14px;
  background: #bbb;
  margin: 0 9px 0 -1px;
}
.x-title .x-bar-end {
  margin: 0 5px 0 -1px;
}
.x-more {
  margin: 3px 8px 0 -2px;
}
.x-name {
  font-size: 12.25px;
  color: #111;
}
.x-controls {
  margin-left: auto;
  display: flex;
  align-items: center;
  gap: 35px;
  padding-right: 18px;
}
.x-maximize {
  margin: 0 1px 0 -1px;
}
.x-tabs {
  height: 24px;
  display: flex;
  border-bottom: 1px solid #dadbdc;
  position: relative;
  color: #333;
  font-size: 11.2px;
}
.x-file {
  width: 56px;
  height: 23px;
  margin-left: 1px;
  background: #0063b1;
  color: #fff;
  text-align: center;
  line-height: 25px;
}
.x-tab {
  padding: 0 14px;
  line-height: 26px;
}
.x-tab.active {
  width: 58px;
  text-align: center;
  padding: 0;
  background: #f5f6f7;
  border: 1px solid #dadbdc;
  border-bottom: none;
  height: 24px;
  line-height: 25px;
  margin-bottom: -1px;
}
.x-tab.active + .x-tab {
  margin-left: 1px;
}
.x-help {
  position: absolute;
  right: 4px;
  top: 3px;
  display: flex;
  align-items: center;
  gap: 9px;
}
.help-dot {
  width: 16px;
  height: 16px;
  border-radius: 50%;
  background: #0f6cbd;
  color: #fff;
  font-weight: 700;
  font-size: 12px;
  line-height: 16px;
  text-align: center;
}
.x-ribbon {
  height: 92px;
  background: #f5f6f7;
  border-bottom: 1px solid #dadbdc;
  display: flex;
  color: #333;
  font-size: 10.9px;
}
.group {
  margin: 3px 0 0;
  border-right: 1px solid #e2e3e4;
  display: flex;
  flex-direction: column;
  justify-content: space-between;
}
.group-body {
  display: flex;
  flex: 1;
  min-height: 0;
}
.group-label {
  text-align: center;
  color: #555;
  line-height: 16px;
}
.g-clipboard { width: 264px; }
.g-organize { width: 165px; }
.g-new { width: 83px; }
.g-open { width: 133px; }
.g-select { width: 115px; }
.big {
  display: flex;
  flex-direction: column;
  align-items: center;
  text-align: center;
  padding-top: 7px;
  line-height: 13px;
}
.big span {
  margin-top: 5px;
}
.big svg {
  height: 28px;
}
.dim {
  color: #7c7c7c;
}
.b-pin { width: 78px; margin-left: 1px; }
.b-copy { width: 30px; }
.b-paste { width: 53px; }
.smalls {
  padding-top: 4px;
  display: flex;
  flex-direction: column;
  gap: 6px;
}
.smalls div {
  height: 16px;
  display: flex;
  align-items: center;
  gap: 4px;
  white-space: nowrap;
}
.two-col {
  padding-top: 12px;
  display: flex;
  flex-direction: column;
  gap: 13px;
  width: 85px;
  padding-left: 8px;
}
.two-col.col-del {
  width: 78px;
  padding-left: 7px;
}
.col-del .mid {
  gap: 5px;
}
.mid {
  height: 16px;
  display: flex;
  align-items: center;
  gap: 4px;
  white-space: nowrap;
}
.mini {
  color: #b5b5b5;
}
.mini.dark {
  color: #333;
}
.inner-sep {
  width: 1px;
  height: 60px;
  margin-top: 10px;
  background: #e2e3e4;
}
.b-newfolder {
  width: 48px;
}
.new-small {
  padding-top: 4px;
  margin-left: 1px;
  display: flex;
  flex-direction: column;
  gap: 6px;
}
.new-small div {
  display: flex;
  align-items: center;
  gap: 2px;
}
.b-props {
  width: 62px;
}
.prop-caret {
  height: 3px !important;
  margin-top: 8px;
  color: #333;
}
.open-list {
  margin-left: 3px;
}
.select-list {
  padding-left: 7px;
  font-size: 10.8px;
}
.select-list div {
  gap: 3px;
}
.ico-gray {
  color: #9a9a9a;
}

/* Address row */
.x-address {
  height: 34px;
  display: flex;
  align-items: center;
}
.x-nav {
  width: 107px;
  display: flex;
  align-items: center;
  gap: 15px;
  padding-left: 13px;
}
.x-nav svg:nth-child(3) {
  margin-left: -1px;
}
.x-nav svg:nth-child(4) {
  margin-left: -4px;
}
.x-path {
  width: 452px;
  height: 23px;
  border: 1px solid #d9d9d9;
  display: flex;
  align-items: center;
  padding-left: 4px;
  color: #111;
  font-size: 12.25px;
}
.path-chev {
  margin: 0 10px 0 7px;
}
.path-end {
  margin-left: auto;
  display: flex;
  align-items: center;
  height: 21px;
  gap: 3px;
  padding-right: 2px;
}
.path-end i {
  width: 1px;
  height: 21px;
  background: #d9d9d9;
}
.x-search {
  width: 202px;
  height: 23px;
  margin-left: 12px;
  border: 1px solid #d9d9d9;
  display: flex;
  align-items: center;
  justify-content: space-between;
  padding: 0 8px;
  color: #6d6d6d;
}

/* Navigation and file list */
.x-main {
  flex: 1;
  display: flex;
  min-height: 0;
}
.nav-pane {
  width: 156px;
  display: flex;
  flex: none;
}
.nav-rows {
  width: 141px;
  padding-top: 2px;
  overflow: hidden;
}
.nav-row {
  height: 24px;
  display: flex;
  align-items: center;
  gap: 5px;
  padding-left: 33px;
  white-space: nowrap;
  color: #222;
}
.nav-row span {
  margin-top: -2px;
}
.nav-row svg {
  width: 16px;
}
.nav-row.sub {
  padding-left: 41px;
}
.nav-row.picked {
  background: #d9d9d9;
  margin-left: 1px;
  padding-left: 32px;
  font-size: 12.25px;
}
.v-scroll {
  width: 15px;
  background: #f0f0f0;
  display: flex;
  flex-direction: column;
  align-items: center;
  padding: 7px 0 5px;
  margin-bottom: 2px;
}
.v-track {
  flex: 1;
  width: 100%;
  padding-top: 235px;
  padding-bottom: 9px;
}
.v-thumb {
  height: 100%;
  background: #cdcdcd;
}
.file-pane {
  flex: 1;
  display: flex;
  flex-direction: column;
  min-width: 0;
}
.file-head {
  height: 28px;
  margin-left: 2px;
  display: flex;
  align-items: center;
  position: relative;
  color: #4c607a;
}
.sort-arrow {
  position: absolute;
  left: 140px;
  top: 2px;
}
.c-name {
  width: 274px;
  padding-left: 20px;
}
.c-date {
  width: 144px;
  padding-left: 6px;
}
.c-type {
  width: 120px;
  padding-left: 6px;
}
.c-size {
  width: 80px;
  padding-left: 6px;
}
.file-head span + span {
  height: 24px;
  line-height: 24px;
  border-left: 1px solid #e5e5e5;
}
.file-head span:last-child {
  border-right: 1px solid #e5e5e5;
}
.file-rows {
  flex: 1;
  padding: 5px 0 0 19px;
}
.file-row {
  width: 598px;
  height: 21px;
  display: flex;
  align-items: center;
  color: #6d6d6d;
  border: 1px solid transparent;
}
.file-row .c-name {
  width: 257px;
  padding-left: 4px;
  display: flex;
  align-items: center;
  gap: 4px;
  color: #111;
}
.file-row .c-name b {
  font-weight: 400;
  font-size: 12.4px;
}
.file-row .c-date {
  width: 144px;
}
.file-row .c-type {
  width: 120px;
}
.file-row .c-size {
  width: 73px;
  padding: 0;
  text-align: right;
}
.file-row.focused {
  height: 23px;
  margin-top: -1px;
  border-color: #a9d3ea;
}
.h-scroll {
  height: 16px;
  margin: 0 2px 2px 4px;
  background: #f0f0f0;
  display: flex;
  align-items: center;
  justify-content: space-between;
  padding: 0 4px 0 6px;
  gap: 6px;
}
.h-thumb {
  flex: 1;
  height: 16px;
  background: #cdcdcd;
  margin-right: 2px;
}
.x-status {
  height: 22px;
  display: flex;
  align-items: center;
  padding: 0 6px 0 15px;
  color: #333;
}
.x-status > span {
  margin-top: -2px;
}
.x-views {
  margin-left: auto;
  display: flex;
  align-items: center;
  gap: 1px;
}
.view-btn {
  width: 21px;
  height: 21px;
  display: flex;
  align-items: center;
  justify-content: center;
}
.view-btn.on {
  background: #cce8ff;
  border: 1px solid #66a7e8;
}

/* Sandbox watermark */
.watermark {
  position: absolute;
  left: 1040px;
  top: 609px;
  display: flex;
  align-items: center;
  z-index: 3;
  font-family: 'Liberation Sans', sans-serif;
  font-size: 48px;
  line-height: 60px;
  color: rgba(255, 255, 255, 0.3);
  -webkit-text-stroke: 1.5px rgba(185, 185, 185, 0.6);
  pointer-events: none;
}
.wm-any {
  width: 72px;
  transform: scaleX(0.69);
  transform-origin: left center;
}
.wm-run {
  width: 60px;
  margin-left: 7px;
  transform: scaleX(0.57);
  transform-origin: left center;
}
```
